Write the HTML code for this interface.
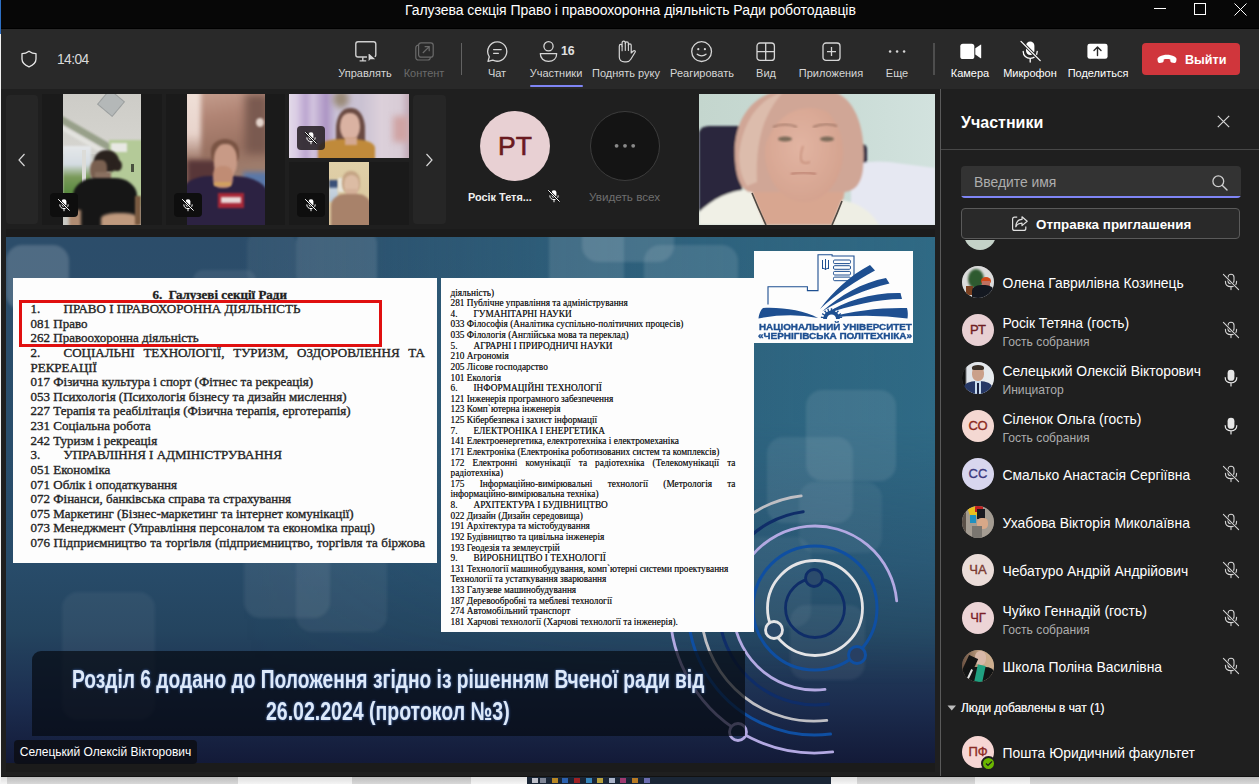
<!DOCTYPE html>
<html><head><meta charset="utf-8">
<style>
*{margin:0;padding:0;box-sizing:border-box}
html,body{width:1259px;height:784px;overflow:hidden;background:#dcdcdc;font-family:"Liberation Sans",sans-serif}
.a{position:absolute}
#title{left:1px;top:0;width:1258px;height:29px;background:#070707;border-bottom:1px solid #000}
#tb{left:1px;top:29px;width:1258px;height:60px;background:#292929}
#stage{left:1px;top:89px;width:939px;height:688px;background:#1f1f1f}
#panel{left:940px;top:89px;width:319px;height:688px;background:#1f1f1f;border-left:1px solid #5a5a5a}
.lbl{position:absolute;top:66px;font-size:11px;color:#d6d6d6;white-space:nowrap;line-height:14px}
.ico{position:absolute}
.ico svg{display:block}
.txt{position:absolute;white-space:nowrap}
</style></head><body>
<!-- left edge -->
<div class="a" style="left:0;top:0;width:1px;height:34px;background:#2d6fc4"></div>
<div class="a" style="left:0;top:34px;width:1px;height:750px;background:#f2f2f2"></div>

<div id="title" class="a">
  <div class="txt" style="left:404px;top:0px;font-size:14px;line-height:20px;color:#fff;letter-spacing:-0.05px">Галузева секція Право і правоохоронна діяльність Ради роботодавців</div>
  <div class="a" style="left:1153px;top:8px;width:12px;height:1px;background:#fff"></div>
  <div class="a" style="left:1193px;top:3px;width:12px;height:12px;border:1px solid #fff"></div>
  <svg class="a" style="left:1233px;top:3px" width="13" height="13" viewBox="0 0 13 13"><path d="M0.5 0.5L12.5 12.5M12.5 0.5L0.5 12.5" stroke="#fff" stroke-width="1"/></svg>
</div>

<div id="tb" class="a"></div>
<div id="stage" class="a"></div>
<div id="panel" class="a"></div>
<div class="a" style="left:6px;top:229px;width:929px;height:543px;background:#1b1b1b"></div>
<div class="a" style="left:1px;top:776px;width:1258px;height:1px;background:#111"></div>


<!-- TOOLBAR -->
<svg class="a" style="left:21px;top:50px" width="16" height="18" viewBox="0 0 16 18"><path d="M8 1.2 C5.5 3 3.3 3.6 1 3.6 V9 C1 12.6 3.6 15 8 16.8 C12.4 15 15 12.6 15 9 V3.6 C12.7 3.6 10.5 3 8 1.2Z" fill="none" stroke="#e6e6e6" stroke-width="1.3" stroke-linejoin="round"/></svg>
<div class="txt" style="left:57px;top:50.5px;font-size:13.8px;line-height:17px;color:#dadada;letter-spacing:-0.6px">14:04</div>

<!-- manage -->
<svg class="a" style="left:353px;top:39px" width="28" height="26" viewBox="0 0 28 26"><rect x="2.8" y="2.7" width="20" height="15.3" rx="2.2" fill="none" stroke="#cfcfcf" stroke-width="1.4"/><path d="M9.8 18.2V21.9M6.6 21.9H13.2" stroke="#cfcfcf" stroke-width="1.4"/><path d="M14.7 12.3L14.9 24.2L17.6 21.1L24.4 21.1Z" fill="#d8d8d8" stroke="#292929" stroke-width="1.6" stroke-linejoin="round"/></svg>
<div class="lbl" style="left:315px;width:100px;text-align:center">Управлять</div>
<!-- content -->
<svg class="a" style="left:414px;top:41px" width="22" height="21" viewBox="0 0 22 21"><rect x="1.8" y="4.2" width="14.5" height="14.8" rx="2.5" fill="none" stroke="#6a6a6a" stroke-width="1.2"/><rect x="4.6" y="1.8" width="14.6" height="14.4" rx="2.5" fill="#292929" stroke="#6a6a6a" stroke-width="1.2"/><path d="M8.8 12L15 5.8M10.6 5.6H15.2V10.2" fill="none" stroke="#6a6a6a" stroke-width="1.2"/></svg>
<div class="lbl" style="left:374px;width:100px;text-align:center;color:#6b6b6b">Контент</div>
<!-- separator -->
<div class="a" style="left:460.5px;top:43px;width:1.6px;height:32px;background:#626262"></div>
<!-- chat -->
<svg class="a" style="left:486px;top:40px" width="23" height="23" viewBox="0 0 23 23"><path d="M11.5 1.8A9.7 9.7 0 1 1 6.8 20.2L2 21.4L3.3 16.8A9.7 9.7 0 0 1 11.5 1.8Z" fill="none" stroke="#d6d6d6" stroke-width="1.3" stroke-linejoin="round"/><path d="M7.6 9.6H15.2M7.6 13.3H12.4" stroke="#d6d6d6" stroke-width="1.3" stroke-linecap="round"/></svg>
<div class="lbl" style="left:447px;width:100px;text-align:center">Чат</div>
<!-- people -->
<svg class="a" style="left:538px;top:40px" width="21" height="23" viewBox="0 0 21 23"><circle cx="10.5" cy="6.3" r="4.6" fill="none" stroke="#d6d6d6" stroke-width="1.3"/><path d="M2.3 13.6H18.7C18.7 18.4 15.3 21.4 10.5 21.4C5.7 21.4 2.3 18.4 2.3 13.6Z" fill="none" stroke="#d6d6d6" stroke-width="1.3" stroke-linejoin="round"/></svg>
<div class="txt" style="left:561px;top:43px;font-size:12.3px;font-weight:bold;line-height:16px;color:#e0e0e0">16</div>
<div class="lbl" style="left:506px;width:100px;text-align:center">Участники</div>
<div class="a" style="left:530px;top:85px;width:53px;height:2px;background:#7f85f5;border-radius:1px"></div>
<!-- raise hand -->
<svg class="a" style="left:617px;top:40px" width="20" height="23" viewBox="0 0 20 23"><path d="M2.3 17V6.2Q2.3 4.4 3.7 4.4Q5.1 4.4 5.1 6.2V3Q5.1 1.2 6.7 1.2Q8.3 1.2 8.3 3V3.4Q8.3 1.8 9.85 1.8Q11.4 1.8 11.4 3.4V5.2Q11.4 3.8 12.8 3.8Q14.2 3.8 14.2 5.2V13L16.3 11Q17.3 10.1 18.1 10.9Q18.6 11.5 18.1 12.3L13.8 19.3Q12.4 21.8 9.3 21.8H7.6Q2.3 21.8 2.3 17Z" fill="none" stroke="#d6d6d6" stroke-width="1.2" stroke-linejoin="round"/><path d="M5.1 6.2V10.8M8.3 3.4V10.4M11.4 5.2V10.4" stroke="#d6d6d6" stroke-width="1.1" stroke-linecap="round"/></svg>
<div class="lbl" style="left:576px;width:100px;text-align:center">Поднять руку</div>
<!-- react -->
<svg class="a" style="left:690px;top:40px" width="24" height="24" viewBox="0 0 24 24"><circle cx="11.6" cy="11.6" r="9.9" fill="none" stroke="#d6d6d6" stroke-width="1.3"/><circle cx="8.3" cy="9.2" r="1.1" fill="#d6d6d6"/><circle cx="14.9" cy="9.2" r="1.1" fill="#d6d6d6"/><path d="M7.2 14.2C9.6 16.4 13.6 16.4 16 14.2" fill="none" stroke="#d6d6d6" stroke-width="1.3" stroke-linecap="round"/></svg>
<div class="lbl" style="left:652px;width:100px;text-align:center">Реагировать</div>
<!-- view -->
<svg class="a" style="left:755px;top:41px" width="21" height="21" viewBox="0 0 21 21"><rect x="2" y="2" width="17.4" height="17.4" rx="3" fill="none" stroke="#d6d6d6" stroke-width="1.3"/><path d="M10.7 2V19.4M2 10.7H19.4" stroke="#d6d6d6" stroke-width="1.3"/></svg>
<div class="lbl" style="left:716px;width:100px;text-align:center">Вид</div>
<!-- apps -->
<svg class="a" style="left:821px;top:41px" width="21" height="21" viewBox="0 0 21 21"><rect x="2" y="2" width="17" height="17.4" rx="3" fill="none" stroke="#d6d6d6" stroke-width="1.3"/><path d="M10.5 6V15M6 10.7H15" stroke="#d6d6d6" stroke-width="1.3"/></svg>
<div class="lbl" style="left:781px;width:100px;text-align:center">Приложения</div>
<!-- more -->
<svg class="a" style="left:887px;top:49px" width="20" height="5" viewBox="0 0 20 5"><circle cx="3.1" cy="2.4" r="1.25" fill="#d6d6d6"/><circle cx="10.1" cy="2.4" r="1.25" fill="#d6d6d6"/><circle cx="17.1" cy="2.4" r="1.25" fill="#d6d6d6"/></svg>
<div class="lbl" style="left:847px;width:100px;text-align:center">Еще</div>
<div class="a" style="left:933px;top:43px;width:2px;height:32px;background:#4e4e4e"></div>
<!-- camera -->
<svg class="a" style="left:959px;top:42px" width="24" height="19" viewBox="0 0 24 19"><rect x="1.3" y="1.7" width="14" height="15.4" rx="2.6" fill="#fff"/><path d="M16.3 6.3L21.6 2.7C21.9 2.5 22.2 2.7 22.2 3V15.9C22.2 16.2 21.9 16.4 21.6 16.2L16.3 12.6Z" fill="#fff"/></svg>
<div class="lbl" style="left:920px;width:100px;text-align:center;color:#fff">Камера</div>
<!-- mic off -->
<svg class="a" style="left:1019px;top:40px" width="23" height="23" viewBox="0 0 23 23"><rect x="7" y="1.6" width="8.4" height="13.4" rx="4.2" fill="#fff"/><path d="M4.2 11.4C4.2 15.6 7.4 18.3 11.2 18.3C15 18.3 18.2 15.6 18.2 11.4M11.2 18.3V22" fill="none" stroke="#fff" stroke-width="1.3" stroke-linecap="round"/><path d="M2 1.4L21.6 21" stroke="#292929" stroke-width="3"/><path d="M2 1.4L21.2 20.6" stroke="#fff" stroke-width="1.3" stroke-linecap="round"/></svg>
<div class="lbl" style="left:980px;width:100px;text-align:center;color:#fff">Микрофон</div>
<!-- share -->
<svg class="a" style="left:1086px;top:42px" width="23" height="19" viewBox="0 0 23 19"><rect x="1.4" y="1.7" width="20.2" height="15.1" rx="2.4" fill="#fff"/><path d="M11.5 13.6V5.2M8 8.5L11.5 5L15 8.5" fill="none" stroke="#292929" stroke-width="1.4" stroke-linecap="round" stroke-linejoin="round"/></svg>
<div class="lbl" style="left:1048px;width:100px;text-align:center;color:#fff">Поделиться</div>
<!-- leave -->
<div class="a" style="left:1142px;top:43px;width:98px;height:32px;background:#d0363c;border-radius:4px"></div>
<svg class="a" style="left:1156px;top:53px" width="22" height="12" viewBox="0 0 22 12"><path d="M1.5 6.8C1.2 5.2 2 4.2 3.6 3.4C8.2 1.2 13.8 1.2 18.4 3.4C20 4.2 20.8 5.2 20.5 6.8L20.2 8.6C20 9.6 19.2 10.2 18.2 10L15.6 9.4C14.8 9.2 14.3 8.6 14.3 7.7V6.4C12.2 5.8 9.8 5.8 7.7 6.4V7.7C7.7 8.6 7.2 9.2 6.4 9.4L3.8 10C2.8 10.2 2 9.6 1.8 8.6Z" fill="#fff"/></svg>
<div class="txt" style="left:1185px;top:52px;font-size:12.6px;font-weight:bold;line-height:16px;color:#fff">Выйти</div>


<!-- VIDEO STRIP -->
<div class="a" style="left:6px;top:95px;width:32px;height:129px;background:#262626;border-radius:4px"></div>
<svg class="a" style="left:16px;top:152px" width="12" height="16" viewBox="0 0 12 16"><path d="M8.5 2L3 8L8.5 14" fill="none" stroke="#d6d6d6" stroke-width="1.2"/></svg>
<div class="a" style="left:413px;top:95px;width:33px;height:129px;background:#262626;border-radius:4px"></div>
<svg class="a" style="left:423px;top:152px" width="12" height="16" viewBox="0 0 12 16"><path d="M3.5 2L9 8L3.5 14" fill="none" stroke="#d6d6d6" stroke-width="1.2"/></svg>
<!-- tile1 -->
<div class="a" style="left:42px;top:94px;width:120px;height:131px;background:#1a1a1a"></div>
<div class="a vid" style="left:63px;top:94px;width:78px;height:131px;overflow:hidden;background:#c9c9c4">
  <div class="a" style="left:0;top:0;width:78px;height:60px;background:linear-gradient(180deg,#cdccc7,#d6d5d0)"></div>
  <div class="a" style="left:38px;top:-1px;width:20px;height:20px;background:#b4b8b8;border:1px solid #9a9e9e;transform:rotate(40deg);filter:blur(.4px)"></div>
  <div class="a" style="left:-8px;top:38px;width:68px;height:7px;background:#98a08a;transform:rotate(30deg);filter:blur(.8px)"></div>
  <div class="a" style="left:-6px;top:47px;width:62px;height:4px;background:#e4e4e0;transform:rotate(30deg);filter:blur(.8px)"></div>
  <div class="a" style="left:0;top:52px;width:28px;height:62px;background:linear-gradient(180deg,#e6e8ea 0%,#d4dce2 30%,#7a9a5a 50%,#5a8a40 75%,#4a7a38 100%);filter:blur(1px)"></div>
  <div class="a" style="left:19px;top:56px;width:4px;height:56px;background:#dcdcd8;filter:blur(.5px)"></div>
  <div class="a" style="left:46px;top:46px;width:34px;height:66px;background:#b4ca98;filter:blur(.8px)"></div>
  <div class="a" style="left:48px;top:49px;width:16px;height:9px;background:#e8e8e4;filter:blur(.8px)"></div>
  <div class="a" style="left:68px;top:70px;width:3px;height:8px;background:#4a5040;filter:blur(.5px)"></div>
  <div class="a" style="left:31px;top:56px;width:25px;height:22px;background:#2a221e;border-radius:50% 50% 40% 40%;filter:blur(1px)"></div>
  <div class="a" style="left:50px;top:66px;width:9px;height:11px;background:#2a221e;border-radius:50%;filter:blur(.8px)"></div>
  <div class="a" style="left:27px;top:66px;width:17px;height:22px;background:#7a6050;border-radius:40% 30% 45% 45%;filter:blur(1px)"></div>
  <div class="a" style="left:32px;top:78px;width:16px;height:10px;background:#8a7060;filter:blur(1px)"></div>
  <div class="a" style="left:10px;top:84px;width:64px;height:50px;background:#161616;border-radius:35% 35% 0 0;filter:blur(1.2px)"></div>
  <div class="a" style="left:38px;top:119px;width:38px;height:14px;background:#c09a7e;border-radius:40% 40% 0 0;filter:blur(1.5px)"></div>
  <div class="a" style="left:6px;top:116px;width:12px;height:18px;background:#b08c72;filter:blur(1.5px)"></div>
  <div class="a" style="left:72px;top:102px;width:6px;height:29px;background:#7a5a40;filter:blur(1px)"></div>
</div>
<div class="a" style="left:50px;top:193px;width:28px;height:24px;background:#0e0e0e;border-radius:4px"></div><div class="a" style="left:57px;top:198px"><svg width="14" height="14" viewBox="0 0 14 14"><rect x="4.6" y="1.2" width="4.8" height="7.6" rx="2.4" fill="#fff"/><path d="M2.8 6.8C2.8 9.2 4.6 10.6 7 10.6C9.4 10.6 11.2 9.2 11.2 6.8M7 10.6V12.8" fill="none" stroke="#fff" stroke-width="1" stroke-linecap="round"/><path d="M1.2 1.2L12.6 12.6" stroke="#111" stroke-width="2.2"/><path d="M1.2 1.2L12.6 12.6" stroke="#fff" stroke-width="1"/></svg></div>
<!-- tile2 -->
<div class="a" style="left:166px;top:94px;width:119px;height:131px;background:#1a1a1a"></div>
<div class="a vid" style="left:187px;top:94px;width:78px;height:131px;overflow:hidden;background:#8a6a5e">
  <div class="a" style="left:-5px;top:-5px;width:90px;height:95px;background:linear-gradient(170deg,#caa494 0%,#b08474 30%,#9a7262 60%,#a08474 100%);filter:blur(2px)"></div>
  <div class="a" style="left:58px;top:0;width:24px;height:60px;background:#7a5a50;filter:blur(4px)"></div>
  <div class="a" style="left:-4px;top:-4px;width:18px;height:72px;background:linear-gradient(180deg,#f0e0d8,#e8d4cc 60%,rgba(232,212,204,0));filter:blur(2.5px)"></div>
  <div class="a" style="left:69px;top:24px;width:8px;height:9px;background:#e4d4cc;border-radius:50%;filter:blur(1.2px)"></div>
  <div class="a" style="left:56px;top:78px;width:26px;height:34px;background:#5a78a8;filter:blur(2.5px)"></div>
  <div class="a" style="left:0;top:66px;width:30px;height:32px;background:#583638;filter:blur(2.5px)"></div>
  <div class="a" style="left:24px;top:45px;width:28px;height:24px;background:#7a5444;border-radius:50% 50% 30% 30%;filter:blur(1.2px)"></div>
  <div class="a" style="left:-4px;top:82px;width:86px;height:52px;background:#2c2242;border-radius:30% 40% 0 0;filter:blur(1.2px)"></div>
  <div class="a" style="left:27px;top:50px;width:23px;height:34px;background:#c89a86;border-radius:45%;filter:blur(1.2px)"></div>
  <div class="a" style="left:26px;top:72px;width:20px;height:22px;background:#c08c74;border-radius:40%;filter:blur(1.2px)"></div>
  <div class="a" style="left:27px;top:88px;width:17px;height:4px;background:#d0a060;filter:blur(.8px)"></div>
  <div class="a" style="left:31px;top:99px;width:26px;height:15px;background:#a82838;filter:blur(1px)"></div>
  <div class="a" style="left:34px;top:103px;width:20px;height:6px;background:#e8d8d8;filter:blur(.8px)"></div>
</div>
<div class="a" style="left:174px;top:193px;width:28px;height:24px;background:#0e0e0e;border-radius:4px"></div><div class="a" style="left:181px;top:198px"><svg width="14" height="14" viewBox="0 0 14 14"><rect x="4.6" y="1.2" width="4.8" height="7.6" rx="2.4" fill="#fff"/><path d="M2.8 6.8C2.8 9.2 4.6 10.6 7 10.6C9.4 10.6 11.2 9.2 11.2 6.8M7 10.6V12.8" fill="none" stroke="#fff" stroke-width="1" stroke-linecap="round"/><path d="M1.2 1.2L12.6 12.6" stroke="#111" stroke-width="2.2"/><path d="M1.2 1.2L12.6 12.6" stroke="#fff" stroke-width="1"/></svg></div>
<!-- tile3 -->
<div class="a vid" style="left:289px;top:94px;width:120px;height:64px;overflow:hidden;background:#cdc4d2">
  <div class="a" style="left:-4px;top:-4px;width:128px;height:72px;background:linear-gradient(90deg,#e6e0ea 0%,#dacce4 9%,#bca6d0 16%,#d2c4de 22%,#ac94c4 32%,#cac2d6 40%,#cac2d2 60%,#dcd0da 75%,#d8ccd6 90%,#b89aa8 100%);filter:blur(1.5px)"></div>
  <div class="a" style="left:44px;top:-4px;width:16px;height:18px;background:#9a8a78;border-radius:50%;filter:blur(3px)"></div>
  <div class="a" style="left:104px;top:22px;width:16px;height:26px;background:#cfa4a4;filter:blur(3px)"></div>
  <div class="a" style="left:47px;top:14px;width:29px;height:46px;background:#6a4a42;border-radius:45% 45% 25% 25%;filter:blur(1px)"></div>
  <div class="a" style="left:51px;top:19px;width:20px;height:27px;background:#dab2a2;border-radius:45%;filter:blur(.8px)"></div>
  <div class="a" style="left:29px;top:45px;width:57px;height:22px;background:#c08a3a;border-radius:40% 40% 0 0;filter:blur(1px)"></div>
  <div class="a" style="left:56px;top:43px;width:12px;height:8px;background:#d4a890;filter:blur(1px)"></div>
</div>
<div class="a" style="left:297px;top:126px;width:28px;height:24px;background:rgba(34,28,32,.85);border-radius:4px"></div><div class="a" style="left:304px;top:131px"><svg width="14" height="14" viewBox="0 0 14 14"><rect x="4.6" y="1.2" width="4.8" height="7.6" rx="2.4" fill="#fff"/><path d="M2.8 6.8C2.8 9.2 4.6 10.6 7 10.6C9.4 10.6 11.2 9.2 11.2 6.8M7 10.6V12.8" fill="none" stroke="#fff" stroke-width="1" stroke-linecap="round"/><path d="M1.2 1.2L12.6 12.6" stroke="#111" stroke-width="2.2"/><path d="M1.2 1.2L12.6 12.6" stroke="#fff" stroke-width="1"/></svg></div>
<!-- tile4 -->
<div class="a" style="left:289px;top:162px;width:120px;height:63px;background:#1a1a1a"></div>
<div class="a vid" style="left:329px;top:162px;width:40px;height:63px;overflow:hidden;background:linear-gradient(180deg,#e0d0a8,#d8c49c)">
  <div class="a" style="left:0;top:18px;width:9px;height:22px;background:linear-gradient(180deg,#3a5078 0%,#3a5078 30%,#c8d4e0 40%,#b8c8d8 100%);filter:blur(.8px)"></div>
  <div class="a" style="left:9px;top:16px;width:6px;height:14px;background:#e8e6dc;filter:blur(.8px)"></div>
  <div class="a" style="left:13px;top:9px;width:18px;height:22px;background:#c4a484;border-radius:45% 45% 40% 40%;filter:blur(.8px)"></div>
  <div class="a" style="left:15px;top:13px;width:15px;height:19px;background:#dcbca4;border-radius:45%;filter:blur(.8px)"></div>
  <div class="a" style="left:17px;top:27px;width:11px;height:8px;background:#d4b098;filter:blur(.8px)"></div>
  <div class="a" style="left:2px;top:32px;width:40px;height:33px;background:#a8826a;border-radius:35% 35% 0 0;filter:blur(.8px)"></div>
</div>
<div class="a" style="left:297px;top:193px;width:28px;height:24px;background:#0e0e0e;border-radius:4px"></div><div class="a" style="left:304px;top:198px"><svg width="14" height="14" viewBox="0 0 14 14"><rect x="4.6" y="1.2" width="4.8" height="7.6" rx="2.4" fill="#fff"/><path d="M2.8 6.8C2.8 9.2 4.6 10.6 7 10.6C9.4 10.6 11.2 9.2 11.2 6.8M7 10.6V12.8" fill="none" stroke="#fff" stroke-width="1" stroke-linecap="round"/><path d="M1.2 1.2L12.6 12.6" stroke="#111" stroke-width="2.2"/><path d="M1.2 1.2L12.6 12.6" stroke="#fff" stroke-width="1"/></svg></div>
<!-- avatar RT -->
<div class="a" style="left:480px;top:111px;width:70px;height:70px;border-radius:50%;background:#e8d0d3"></div>
<div class="txt" style="left:480px;top:128px;width:70px;text-align:center;font-size:26.5px;line-height:36px;color:#6a1a20;-webkit-text-stroke:.6px #6a1a20">PT</div>
<div class="txt" style="left:468px;top:190px;font-size:10.9px;font-weight:bold;line-height:14px;color:#f0f0f0">Росік Тетя...</div>
<div class="a" style="left:547px;top:189px"><svg width="14" height="14" viewBox="0 0 14 14"><rect x="4.6" y="1.2" width="4.8" height="7.6" rx="2.4" fill="#fff"/><path d="M2.8 6.8C2.8 9.2 4.6 10.6 7 10.6C9.4 10.6 11.2 9.2 11.2 6.8M7 10.6V12.8" fill="none" stroke="#fff" stroke-width="1" stroke-linecap="round"/><path d="M1.2 1.2L12.6 12.6" stroke="#111" stroke-width="2.2"/><path d="M1.2 1.2L12.6 12.6" stroke="#fff" stroke-width="1"/></svg></div>
<div class="a" style="left:590px;top:111px;width:70px;height:70px;border-radius:50%;background:#141414;border:1px solid #3c3c3c"></div>
<svg class="a" style="left:613px;top:142px" width="24" height="8" viewBox="0 0 24 8"><circle cx="3.6" cy="3.8" r="1.9" fill="#8a8a8a"/><circle cx="12" cy="3.8" r="1.9" fill="#8a8a8a"/><circle cx="20.2" cy="3.8" r="1.9" fill="#8a8a8a"/></svg>
<div class="txt" style="left:589px;top:189.5px;font-size:11.7px;line-height:14px;color:#6e6e6e">Увидеть всех</div>
<!-- big video -->
<svg class="a" style="left:699px;top:94px" width="236" height="131" viewBox="0 0 236 131">
 <defs><filter id="bl1" x="-10%" y="-10%" width="120%" height="120%"><feGaussianBlur stdDeviation="1.1"/></filter>
 <linearGradient id="wall" x1="0" x2="1" y1="0" y2="0"><stop offset="0" stop-color="#c4d6ce"/><stop offset=".6" stop-color="#cadcd6"/><stop offset="1" stop-color="#d2e2de"/></linearGradient>
 <radialGradient id="face" cx=".45" cy=".45" r=".6"><stop offset="0" stop-color="#e2b4a2"/><stop offset="1" stop-color="#d4a28e"/></radialGradient></defs>
 <rect width="236" height="131" fill="url(#wall)"/>
 <g filter="url(#bl1)">
 <path d="M0 38Q2 32 10 32H40L44 118H0Z" fill="#2a283c"/>
 <rect x="152" y="50" width="16" height="58" rx="5" fill="#2a283c"/>
 <path d="M152 74Q160 66 190 68L236 74V131H152Z" fill="#e6e8f2"/>
 <path d="M62 86H148L144 106L134 131H66L52 99Z" fill="#d8a690"/>
 <path d="M0 118C14 104 36 94 52 96L66 131H0Z" fill="#f0f0e6"/>
 <path d="M143 106C156 108 172 116 180 131H133Z" fill="#eeeee4"/>
 <path d="M36 66C33 28 52 0 84 -4H128C156 0 168 34 164 76C162 90 156 97 146 98H50C40 94 37 80 36 66Z" fill="#d0a696"/>
 <path d="M40 60C44 28 58 6 84 -2C66 18 56 46 58 88L48 92C42 82 40 72 40 60Z" fill="#dcbcac"/>
 <ellipse cx="105" cy="58" rx="39" ry="50" fill="url(#face)"/>
 <path d="M62 50C62 18 84 -2 108 -2C132 -2 150 14 150 40C142 22 126 14 110 14C92 14 72 26 64 60Z" fill="#d0a696"/>
 
 
 </g>
 <path d="M53 99Q60 116 67 131M143 107Q138 120 133 131" fill="none" stroke="#4e4842" stroke-width="1.6"/>
 <path d="M74 33Q86 28 98 33M114 33Q126 28 138 32" fill="none" stroke="#9a7262" stroke-width="1.6" filter="url(#bl1)"/>
 <ellipse cx="86" cy="45" rx="7" ry="2.6" fill="#7a6a58" filter="url(#bl1)"/>
 <ellipse cx="128" cy="45" rx="7" ry="2.6" fill="#7a6a58" filter="url(#bl1)"/>
 <path d="M92 80Q104 77 117 80" fill="none" stroke="#b87a6a" stroke-width="2.2" filter="url(#bl1)"/>
 <path d="M104 52Q100 64 103 68Q107 70 111 68" fill="none" stroke="#c48c78" stroke-width="1.4" filter="url(#bl1)"/>
</svg>


<!-- SLIDE -->
<div class="a" id="slide" style="left:6px;top:237px;width:929px;height:526px;overflow:hidden;background:linear-gradient(180deg,#2c4d6a 0%,#2a4e6c 40%,#284c6a 62%,#24445f 75%,#1c2e50 88%,#131a38 100%)">
  <div class="a" style="left:0;top:0;width:929px;height:526px;background:linear-gradient(90deg,rgba(50,125,150,0) 25%,rgba(50,125,150,.35) 60%,rgba(50,125,150,.6) 100%);-webkit-mask-image:linear-gradient(180deg,#000 0%,#000 35%,rgba(0,0,0,.5) 60%,transparent 85%)"></div>
  <div class="a" style="left:0px;top:8px;width:63px;height:65px;border-radius:16px;background:rgba(255,255,255,0.17);filter:blur(1.5px)"></div>
  <div class="a" style="left:241px;top:-5px;width:49px;height:53px;border-radius:12px;background:rgba(255,255,255,0.05);filter:blur(1.5px)"></div>
  <div class="a" style="left:290px;top:-9px;width:81px;height:72px;border-radius:16px;background:rgba(255,255,255,0.11);filter:blur(1.5px)"></div>
  <div class="a" style="left:543px;top:-17px;width:75px;height:80px;border-radius:16px;background:rgba(255,255,255,0.11);filter:blur(1.5px)"></div>
  <div class="a" style="left:576px;top:-22px;width:92px;height:47px;border-radius:16px;background:rgba(255,255,255,0.12);filter:blur(1.5px)"></div>
  <div class="a" style="left:638px;top:8px;width:94px;height:75px;border-radius:16px;background:rgba(255,255,255,0.11);filter:blur(1.5px)"></div>
  <div class="a" style="left:187px;top:33px;width:63px;height:30px;border-radius:10px;background:rgba(255,255,255,0.08);filter:blur(1.5px)"></div>
  <div class="a" style="left:800px;top:153px;width:90px;height:91px;border-radius:16px;background:rgba(255,255,255,0.09);filter:blur(1.5px)"></div>
  <div class="a" style="left:761px;top:200px;width:86px;height:86px;border-radius:16px;background:rgba(255,255,255,0.08);filter:blur(1.5px)"></div>
  <div class="a" style="left:793px;top:245px;width:83px;height:71px;border-radius:16px;background:rgba(255,255,255,0.06);filter:blur(1.5px)"></div>
  <div class="a" style="left:56px;top:355px;width:93px;height:128px;border-radius:16px;background:rgba(255,255,255,0.05);filter:blur(1.5px)"></div>
  <div class="a" style="left:238px;top:293px;width:86px;height:88px;border-radius:16px;background:rgba(255,255,255,0.07);filter:blur(1.5px)"></div>
  <div class="a" style="left:290px;top:303px;width:91px;height:92px;border-radius:16px;background:rgba(255,255,255,0.06);filter:blur(1.5px)"></div>
  <div class="a" style="left:784px;top:368px;width:75px;height:75px;border-radius:16px;background:rgba(255,255,255,0.06);filter:blur(1.5px)"></div>
  <div class="a" style="left:735px;top:300px;width:70px;height:90px;border-radius:16px;background:rgba(255,255,255,0.05);filter:blur(1.5px)"></div>
</div>
<style>
.p1{font-family:"Liberation Serif",serif;font-size:13px;line-height:14.61px;color:#1a1a1a;-webkit-text-stroke:0.35px #2a2a2a}
.p2{font-family:"Liberation Serif",serif;font-size:9.3px;line-height:10.63px;color:#1e1e1e;white-space:nowrap;text-shadow:0 0 .6px #555}
.p1 div,.p2 div{white-space:nowrap}
.p1 .jl,.p2 .jl{white-space:normal}
.jl{text-align:justify;text-align-last:justify}
</style>
<svg class="a" style="left:6px;top:237px" width="929" height="526" viewBox="6 237 929 526"><path d="M832.7 751.9A145 145 0 0 1 696.2 524.8" fill="none" stroke="#b3a9e2" stroke-width="2.8" stroke-linecap="round"/><path d="M830.5 734.1A127 127 0 0 1 711.0 535.2" fill="none" stroke="#0f4fa2" stroke-width="3" stroke-linecap="round"/><path d="M826.8 720.4A113 113 0 0 1 801.2 495.8" fill="none" stroke="#bfbfc4" stroke-width="2.8" stroke-linecap="round"/><path d="M828.5 704.1A97 97 0 1 1 803.2 511.7" fill="none" stroke="#0f2d68" stroke-width="3" stroke-linecap="round"/><path d="M825.0 689.4A82 82 0 1 1 896.7 600.9" fill="none" stroke="#b3a9e2" stroke-width="2.8" stroke-linecap="round"/><circle cx="815" cy="608" r="62" fill="none" stroke="#0f4fa2" stroke-width="3"/><circle cx="815" cy="608" r="47.5" fill="none" stroke="#e4e4e6" stroke-width="2.8"/><circle cx="815" cy="608" r="29.5" fill="none" stroke="#0f2d68" stroke-width="2.8"/><circle cx="814" cy="578" r="8.5" fill="#2b4b6c" stroke="#0f2d68" stroke-width="2.8"/><circle cx="774" cy="630" r="8.5" fill="#2a4868" stroke="#e4e4e6" stroke-width="2.8"/><circle cx="857" cy="655" r="8.5" fill="#283f62" stroke="#0f4fa2" stroke-width="3"/><circle cx="738" cy="732" r="8.5" fill="#1f2f56" stroke="#b3a9e2" stroke-width="2.8"/></svg>
<div class="a" style="left:13px;top:278px;width:424px;height:285px;background:#fdfdfd"></div>
<div class="a p1" style="left:30.5px;top:287.6px;width:394.5px">
<div style="text-align:center;margin-left:-16px"><b>6.&nbsp; Галузеві секції Ради</b></div>
<div><span style="display:inline-block;width:33px">1.</span>ПРАВО І ПРАВОХОРОННА ДІЯЛЬНІСТЬ</div>
<div>081 Право</div>
<div>262 Правоохоронна діяльність</div>
<div class="jl"><span style="display:inline-block;width:33px">2.</span>СОЦІАЛЬНІ ТЕХНОЛОГІЇ, ТУРИЗМ, ОЗДОРОВЛЕННЯ ТА</div>
<div>РЕКРЕАЦІЇ</div>
<div>017 Фізична культура і спорт (Фітнес та рекреація)</div>
<div>053 Психологія (Психологія бізнесу та дизайн мислення)</div>
<div>227 Терапія та реабілітація (Фізична терапія, ерготерапія)</div>
<div>231 Соціальна робота</div>
<div>242 Туризм і рекреація</div>
<div><span style="display:inline-block;width:33px">3.</span>УПРАВЛІННЯ І АДМІНІСТРУВАННЯ</div>
<div>051 Економіка</div>
<div>071 Облік і оподаткування</div>
<div>072 Фінанси, банківська справа та страхування</div>
<div>075 Маркетинг (Бізнес-маркетинг та інтернет комунікації)</div>
<div>073 Менеджмент (Управління персоналом та економіка праці)</div>
<div class="jl">076 Підприємництво та торгівля (підприємництво, торгівля та біржова</div>
</div>
<div class="a" style="left:19px;top:300px;width:363px;height:47px;border:3px solid #e01010"></div>
<div class="a" style="left:441px;top:278px;width:313px;height:354px;background:#fdfdfd"></div>
<div class="a p2" style="left:450.5px;top:287.6px;width:285px">
<div>діяльність)</div>
<div>281 Публічне управління та адміністрування</div>
<div><span style="display:inline-block;width:23px">4.</span>ГУМАНІТАРНІ НАУКИ</div>
<div>033 Філософія (Аналітика суспільно-політичних процесів)</div>
<div>035 Філологія (Англійська мова та переклад)</div>
<div><span style="display:inline-block;width:23px">5.</span>АГРАРНІ І ПРИРОДНИЧІ НАУКИ</div>
<div>210 Агрономія</div>
<div>205 Лісове господарство</div>
<div>101 Екологія</div>
<div><span style="display:inline-block;width:23px">6.</span>ІНФОРМАЦІЙНІ ТЕХНОЛОГІЇ</div>
<div>121 Інженерія програмного забезпечення</div>
<div>123 Комп`ютерна інженерія</div>
<div>125 Кібербезпека і захист інформації</div>
<div><span style="display:inline-block;width:23px">7.</span>ЕЛЕКТРОНІКА І ЕНЕРГЕТИКА</div>
<div>141 Електроенергетика, електротехніка і електромеханіка</div>
<div>171 Електроніка (Електроніка роботизованих систем та комплексів)</div>
<div class="jl">172 Електронні комунікації та радіотехніка (Телекомунікації та</div>
<div>радіотехніка)</div>
<div class="jl">175 Інформаційно-вимірювальні технології (Метрологія та</div>
<div>інформаційно-вимірювальна техніка)</div>
<div><span style="display:inline-block;width:23px">8.</span>АРХІТЕКТУРА І БУДІВНИЦТВО</div>
<div>022 Дизайн (Дизайн середовища)</div>
<div>191 Архітектура та містобудування</div>
<div>192 Будівництво та цивільна інженерія</div>
<div>193 Геодезія та землеустрій</div>
<div><span style="display:inline-block;width:23px">9.</span>ВИРОБНИЦТВО І ТЕХНОЛОГІЇ</div>
<div>131 Технології машинобудування, комп`ютерні системи проектування</div>
<div>Технології та устаткування зварювання</div>
<div>133 Галузеве машинобудування</div>
<div>187 Деревообробні та меблеві технології</div>
<div>274 Автомобільний транспорт</div>
<div>181 Харчові технології (Харчові технології та інженерія).</div>
</div>
<div class="a" style="left:754px;top:250.5px;width:158.5px;height:92px;background:#fdfdfd"></div>


<svg class="a" style="left:754px;top:250.5px" width="159" height="92" viewBox="754 250.5 159 92">
 <path d="M768 304V286.2H807.4V290.1H818V254.2H832.1V255.5H854V281" fill="none" stroke="#1e4f91" stroke-width="1.1"/>
 <g fill="none" stroke="#1e4f91" stroke-width="1">
  <rect x="833.5" y="259.5" width="17" height="3.6" rx="1.2"/>
  <rect x="833.5" y="265.2" width="17" height="3.6" rx="1.2"/>
  <rect x="833.5" y="270.9" width="17" height="3.6" rx="1.2"/>
  <rect x="833.5" y="276.6" width="17" height="3.6" rx="1.2"/>
 </g>
 <path d="M822.5 259.5V268.5M825.5 258.5V269.5M828.5 259.5V268.5M822.5 267.5Q825.5 270 828.5 267.5" fill="none" stroke="#1e4f91" stroke-width="1"/>
 <path d="M758.5 318C759 313 761 309 763 307.5C782 306.5 804 310 818 317.5Q790 312 758.5 318Z" fill="#1e4f91"/>
 <path d="M826 317.5C855 310 880 307 907 307.5C908 311 908 315 907.5 318Q870 313 826 317.5Z" fill="#1e4f91"/>
 <path d="M824 314C845 300 872 292 900.5 292.5L902 298.5C877 298.5 850 305 824 314Z" fill="#1e4f91"/>
 <path d="M822 311C840 295 862 282 886 277.5L889.5 283C866 288.5 842 299 822 311Z" fill="#1e4f91"/>
 <path d="M820 308.5C833 291 850 275 870 264.5L875 270C856 280 836 294 820 308.5Z" fill="#1e4f91"/>
 <path d="M823.2 318.5L823.2 318.5L823.2 317.6L820.8 317.4L821.0 315.9L823.4 316.5L823.7 315.7L823.7 315.7L824.0 314.9L821.8 313.8L822.5 312.5L824.6 313.9L825.1 313.2L825.1 313.2L825.7 312.5L824.0 310.7L825.2 309.8L826.6 311.8L827.4 311.3L827.4 311.3L828.1 310.9L827.1 308.6L828.5 308.1L829.2 310.5L830.1 310.3L830.1 310.3L830.9 310.2L830.7 307.7L832.3 307.7L832.1 310.2L832.9 310.3L832.9 310.3L833.8 310.5L834.5 308.1L835.9 308.6L834.9 310.9L835.6 311.3L835.6 311.3L836.4 311.8L837.8 309.8L839.0 310.7L837.3 312.5L837.9 313.2L837.9 313.2L838.4 313.9L840.5 312.5L841.2 313.8L839.0 314.9L839.3 315.7L839.3 315.7L839.6 316.5L842.0 315.9L842.2 317.4L839.8 317.6L839.8 318.5Z" fill="#1e4f91"/><path d="M826.9 318.5A4.6 4.6 0 0 1 836.1 318.5Z" fill="#fff"/>
</svg>
<div class="txt" style="left:759px;top:322px;font-size:8.4px;font-weight:bold;line-height:10px;color:#1e4f91;-webkit-text-stroke:.35px #1e4f91;transform:scaleX(1.175);transform-origin:0 0">НАЦІОНАЛЬНИЙ УНІВЕРСИТЕТ</div>
<div class="txt" style="left:758px;top:331px;font-size:8.4px;font-weight:bold;line-height:10px;color:#1e4f91;-webkit-text-stroke:.35px #1e4f91;transform:scaleX(1.19);transform-origin:0 0">«ЧЕРНІГІВСЬКА ПОЛІТЕХНІКА»</div>

<div class="a" style="left:32px;top:650.5px;width:713px;height:85.5px;background:rgba(6,10,17,.7);border-radius:9px 0 0 0"></div>
<div class="txt" style="left:72px;top:664px;font-size:26px;font-weight:bold;line-height:30px;color:#dde9f9;transform:scaleX(.738);transform-origin:0 0;text-shadow:0 0 3px rgba(90,140,230,.8)">Розділ 6 додано до Положення згідно із рішенням Вченої ради від</div>
<div class="txt" style="left:266px;top:696px;font-size:26px;font-weight:bold;line-height:30px;color:#dde9f9;transform:scaleX(.75);transform-origin:0 0;text-shadow:0 0 3px rgba(90,140,230,.8)">26.02.2024 (протокол №3)</div>
<div class="a" style="left:14px;top:740px;width:183px;height:23.5px;background:rgba(12,14,22,.9);border-radius:4px"></div>
<div class="txt" style="left:19.8px;top:744px;font-size:12px;line-height:16px;color:#fff">Селецький Олексій Вікторович</div>


<!-- PANEL -->
<div class="txt" style="left:961px;top:113px;font-size:16px;font-weight:bold;line-height:19px;color:#fff">Участники</div>
<svg class="a" style="left:1216px;top:114px" width="15" height="15" viewBox="0 0 15 15"><path d="M1.8 1.8L13.2 13.2M13.2 1.8L1.8 13.2" stroke="#d6d6d6" stroke-width="1.2"/></svg>
<div class="a" style="left:941px;top:149px;width:318px;height:1px;background:#474747"></div>
<div class="a" style="left:961px;top:166px;width:280px;height:32px;background:#333;border-radius:4px;overflow:hidden"><div class="a" style="left:0;top:30px;width:280px;height:2px;background:#7f85f5"></div></div>
<div class="txt" style="left:974px;top:174px;font-size:13.9px;line-height:17px;color:#adadad">Введите имя</div>
<svg class="a" style="left:1211px;top:174px" width="18" height="18" viewBox="0 0 18 18"><circle cx="7.3" cy="7.3" r="5.4" fill="none" stroke="#cfcfcf" stroke-width="1.3"/><path d="M11.2 11.2L16 16" stroke="#cfcfcf" stroke-width="1.4" stroke-linecap="round"/></svg>
<div class="a" style="left:961px;top:208px;width:279px;height:31px;background:#292929;border:1px solid #5a5a5a;border-radius:4px"></div>
<svg class="a" style="left:1011px;top:215px" width="18" height="17" viewBox="0 0 18 17"><path d="M6.2 2.2H3.6C2.4 2.2 1.6 3 1.6 4.2V13.4C1.6 14.6 2.4 15.4 3.6 15.4H12.8C14 15.4 14.8 14.6 14.8 13.4V11.6" fill="none" stroke="#e0e0e0" stroke-width="1.2"/><path d="M11 1.8L16.2 6.2L11 10.6V8.2C8 8.2 6 9.2 4.8 11.8C5 7.4 7.2 4.6 11 4.4Z" fill="none" stroke="#e0e0e0" stroke-width="1.2" stroke-linejoin="round"/></svg>
<div class="txt" style="left:1036px;top:216px;font-size:13.4px;font-weight:bold;line-height:17px;color:#fff">Отправка приглашения</div>
<div class="a" style="left:941px;top:240px;width:318px;height:537px;overflow:hidden">
  <div class="a" style="left:23px;top:-22px;width:32px;height:32px;border-radius:50%;background:#c4d2c8"></div>
</div>
<div class="a" style="left:962px;top:266px;width:32px;height:32px;border-radius:50%;overflow:hidden;background:#555"><div class="a" style="left:0;top:0;width:32px;height:32px;background:#dcdcdc"></div><div class="a" style="left:6px;top:3px;width:16px;height:20px;background:#2e5a30;border-radius:50%;filter:blur(1px)"></div><div class="a" style="left:4px;top:20px;width:7px;height:9px;background:#7a4020;filter:blur(.6px)"></div><div class="a" style="left:19px;top:11px;width:10px;height:8px;background:#d04818;border-radius:50%;filter:blur(.6px)"></div><div class="a" style="left:20px;top:15px;width:8px;height:6px;background:#c07060;filter:blur(.6px)"></div><div class="a" style="left:10px;top:19px;width:22px;height:14px;background:#141820;border-radius:40% 40% 0 0;filter:blur(.6px)"></div></div>
<div class="txt" style="left:1002.5px;top:274px;font-size:13.9px;line-height:18px;color:#fff">Олена Гаврилівна Козинець</div>
<svg class="a" style="left:1222px;top:273px" width="18" height="18" viewBox="0 0 18 18"><rect x="6" y="1.2" width="6" height="9.6" rx="3" fill="none" stroke="#d6d6d6" stroke-width="1.1"/><path d="M3.4 8.4C3.4 11.6 5.8 13.6 9 13.6C12.2 13.6 14.6 11.6 14.6 8.4M9 13.6V16.6" fill="none" stroke="#d6d6d6" stroke-width="1.1" stroke-linecap="round"/><path d="M1.4 1.4L16.8 16.8" stroke="#1f1f1f" stroke-width="2.6"/><path d="M1.4 1.4L16.6 16.6" stroke="#d6d6d6" stroke-width="1.1" stroke-linecap="round"/></svg>
<div class="a" style="left:962px;top:314px;width:32px;height:32px;border-radius:50%;background:#e8d0d3"></div><div class="txt" style="left:962px;top:322px;width:32px;text-align:center;font-size:13px;line-height:16px;color:#6e1d22;-webkit-text-stroke:.35px currentColor">РТ</div>
<div class="txt" style="left:1002.5px;top:314px;font-size:13.9px;line-height:18px;color:#fff">Росік Тетяна (гость)</div><div class="txt" style="left:1002.5px;top:334px;font-size:12.1px;line-height:16px;color:#adadad">Гость собрания</div>
<svg class="a" style="left:1222px;top:321px" width="18" height="18" viewBox="0 0 18 18"><rect x="6" y="1.2" width="6" height="9.6" rx="3" fill="none" stroke="#d6d6d6" stroke-width="1.1"/><path d="M3.4 8.4C3.4 11.6 5.8 13.6 9 13.6C12.2 13.6 14.6 11.6 14.6 8.4M9 13.6V16.6" fill="none" stroke="#d6d6d6" stroke-width="1.1" stroke-linecap="round"/><path d="M1.4 1.4L16.8 16.8" stroke="#1f1f1f" stroke-width="2.6"/><path d="M1.4 1.4L16.6 16.6" stroke="#d6d6d6" stroke-width="1.1" stroke-linecap="round"/></svg>
<div class="a" style="left:962px;top:362px;width:32px;height:32px;border-radius:50%;overflow:hidden;background:#555"><div class="a" style="left:0;top:0;width:32px;height:32px;background:linear-gradient(90deg,#101010 0,#101010 3px,#dfe3e8 5px,#e8ecef)"></div><div class="a" style="left:10px;top:4px;width:12px;height:15px;background:#caa08a;border-radius:45%"></div><div class="a" style="left:10px;top:3px;width:12px;height:5px;background:#3a3028;border-radius:50% 50% 20% 20%"></div><div class="a" style="left:2px;top:19px;width:28px;height:14px;background:#263866;border-radius:45% 45% 0 0"></div><div class="a" style="left:13px;top:19px;width:6px;height:13px;background:#c8dcf0"></div><div class="a" style="left:15px;top:21px;width:2px;height:11px;background:#182040"></div></div>
<div class="txt" style="left:1002.5px;top:362px;font-size:13.9px;line-height:18px;color:#fff">Селецький Олексій Вікторович</div><div class="txt" style="left:1002.5px;top:382px;font-size:12.1px;line-height:16px;color:#adadad">Инициатор</div>
<svg class="a" style="left:1224px;top:369px" width="14" height="18" viewBox="0 0 14 18"><rect x="3.6" y="0.8" width="6.8" height="11" rx="3.4" fill="#e6e6e6"/><path d="M1.2 8.6C1.2 11.8 3.6 13.8 7 13.8C10.4 13.8 12.8 11.8 12.8 8.6M7 13.8V17" fill="none" stroke="#e6e6e6" stroke-width="1.2" stroke-linecap="round"/></svg>
<div class="a" style="left:962px;top:410px;width:32px;height:32px;border-radius:50%;background:#f4d8d2"></div><div class="txt" style="left:962px;top:418px;width:32px;text-align:center;font-size:13px;line-height:16px;color:#8c2a1e;-webkit-text-stroke:.35px currentColor">СО</div>
<div class="txt" style="left:1002.5px;top:410px;font-size:13.9px;line-height:18px;color:#fff">Сіленок Ольга (гость)</div><div class="txt" style="left:1002.5px;top:430px;font-size:12.1px;line-height:16px;color:#adadad">Гость собрания</div>
<svg class="a" style="left:1224px;top:417px" width="14" height="18" viewBox="0 0 14 18"><rect x="3.6" y="0.8" width="6.8" height="11" rx="3.4" fill="#e6e6e6"/><path d="M1.2 8.6C1.2 11.8 3.6 13.8 7 13.8C10.4 13.8 12.8 11.8 12.8 8.6M7 13.8V17" fill="none" stroke="#e6e6e6" stroke-width="1.2" stroke-linecap="round"/></svg>
<div class="a" style="left:962px;top:458px;width:32px;height:32px;border-radius:50%;background:#d8d6ee"></div><div class="txt" style="left:962px;top:466px;width:32px;text-align:center;font-size:13px;line-height:16px;color:#3c3a80;-webkit-text-stroke:.35px currentColor">СС</div>
<div class="txt" style="left:1002.5px;top:466px;font-size:13.9px;line-height:18px;color:#fff">Смалько Анастасія Сергіївна</div>
<svg class="a" style="left:1222px;top:465px" width="18" height="18" viewBox="0 0 18 18"><rect x="6" y="1.2" width="6" height="9.6" rx="3" fill="none" stroke="#d6d6d6" stroke-width="1.1"/><path d="M3.4 8.4C3.4 11.6 5.8 13.6 9 13.6C12.2 13.6 14.6 11.6 14.6 8.4M9 13.6V16.6" fill="none" stroke="#d6d6d6" stroke-width="1.1" stroke-linecap="round"/><path d="M1.4 1.4L16.8 16.8" stroke="#1f1f1f" stroke-width="2.6"/><path d="M1.4 1.4L16.6 16.6" stroke="#d6d6d6" stroke-width="1.1" stroke-linecap="round"/></svg>
<div class="a" style="left:962px;top:506px;width:32px;height:32px;border-radius:50%;overflow:hidden;background:#555"><div class="a" style="left:0;top:0;width:32px;height:32px;background:#a49c92"></div><div class="a" style="left:0;top:0;width:4px;height:32px;background:#5a5048"></div><div class="a" style="left:7px;top:1px;width:9px;height:10px;background:#e8c020;transform:rotate(-20deg);filter:blur(.5px)"></div><div class="a" style="left:13px;top:0px;width:8px;height:6px;background:#c02020;filter:blur(.5px)"></div><div class="a" style="left:15px;top:3px;width:8px;height:10px;background:#1a1a20;filter:blur(.5px)"></div><div class="a" style="left:8px;top:9px;width:6px;height:8px;background:#2090c0;filter:blur(.5px)"></div><div class="a" style="left:15px;top:12px;width:11px;height:11px;background:#d8a888;border-radius:40%;filter:blur(.5px)"></div><div class="a" style="left:10px;top:20px;width:10px;height:12px;background:#7a7670;filter:blur(.6px)"></div></div>
<div class="txt" style="left:1002.5px;top:514px;font-size:13.9px;line-height:18px;color:#fff">Ухабова Вікторія Миколаївна</div>
<svg class="a" style="left:1222px;top:513px" width="18" height="18" viewBox="0 0 18 18"><rect x="6" y="1.2" width="6" height="9.6" rx="3" fill="none" stroke="#d6d6d6" stroke-width="1.1"/><path d="M3.4 8.4C3.4 11.6 5.8 13.6 9 13.6C12.2 13.6 14.6 11.6 14.6 8.4M9 13.6V16.6" fill="none" stroke="#d6d6d6" stroke-width="1.1" stroke-linecap="round"/><path d="M1.4 1.4L16.8 16.8" stroke="#1f1f1f" stroke-width="2.6"/><path d="M1.4 1.4L16.6 16.6" stroke="#d6d6d6" stroke-width="1.1" stroke-linecap="round"/></svg>
<div class="a" style="left:962px;top:554px;width:32px;height:32px;border-radius:50%;background:#eadcd8"></div><div class="txt" style="left:962px;top:562px;width:32px;text-align:center;font-size:13px;line-height:16px;color:#7a3a30;-webkit-text-stroke:.35px currentColor">ЧА</div>
<div class="txt" style="left:1002.5px;top:562px;font-size:13.9px;line-height:18px;color:#fff">Чебатуро Андрій Андрійович</div>
<svg class="a" style="left:1222px;top:561px" width="18" height="18" viewBox="0 0 18 18"><rect x="6" y="1.2" width="6" height="9.6" rx="3" fill="none" stroke="#d6d6d6" stroke-width="1.1"/><path d="M3.4 8.4C3.4 11.6 5.8 13.6 9 13.6C12.2 13.6 14.6 11.6 14.6 8.4M9 13.6V16.6" fill="none" stroke="#d6d6d6" stroke-width="1.1" stroke-linecap="round"/><path d="M1.4 1.4L16.8 16.8" stroke="#1f1f1f" stroke-width="2.6"/><path d="M1.4 1.4L16.6 16.6" stroke="#d6d6d6" stroke-width="1.1" stroke-linecap="round"/></svg>
<div class="a" style="left:962px;top:602px;width:32px;height:32px;border-radius:50%;background:#ecd4d6"></div><div class="txt" style="left:962px;top:610px;width:32px;text-align:center;font-size:13px;line-height:16px;color:#7a1e28;-webkit-text-stroke:.35px currentColor">ЧГ</div>
<div class="txt" style="left:1002.5px;top:602px;font-size:13.9px;line-height:18px;color:#fff">Чуйко Геннадій (гость)</div><div class="txt" style="left:1002.5px;top:622px;font-size:12.1px;line-height:16px;color:#adadad">Гость собрания</div>
<svg class="a" style="left:1222px;top:609px" width="18" height="18" viewBox="0 0 18 18"><rect x="6" y="1.2" width="6" height="9.6" rx="3" fill="none" stroke="#d6d6d6" stroke-width="1.1"/><path d="M3.4 8.4C3.4 11.6 5.8 13.6 9 13.6C12.2 13.6 14.6 11.6 14.6 8.4M9 13.6V16.6" fill="none" stroke="#d6d6d6" stroke-width="1.1" stroke-linecap="round"/><path d="M1.4 1.4L16.8 16.8" stroke="#1f1f1f" stroke-width="2.6"/><path d="M1.4 1.4L16.6 16.6" stroke="#d6d6d6" stroke-width="1.1" stroke-linecap="round"/></svg>
<div class="a" style="left:962px;top:650px;width:32px;height:32px;border-radius:50%;overflow:hidden;background:#555"><div class="a" style="left:0;top:0;width:32px;height:32px;background:linear-gradient(90deg,#6a5040,#c8a888 60%,#d0b090)"></div><div class="a" style="left:13px;top:1px;width:11px;height:14px;background:#d8b8a8;border-radius:45%;filter:blur(.5px)"></div><div class="a" style="left:2px;top:6px;width:10px;height:22px;background:#141414;transform:rotate(25deg);filter:blur(.5px)"></div><div class="a" style="left:3px;top:17px;width:29px;height:16px;background:#121414;border-radius:30% 30% 0 0;filter:blur(.5px)"></div><div class="a" style="left:14px;top:15px;width:8px;height:17px;background:#20a080;transform:rotate(12deg);filter:blur(.5px)"></div><div class="a" style="left:7px;top:19px;width:2px;height:10px;background:#e0e0e0;transform:rotate(25deg)"></div></div>
<div class="txt" style="left:1002.5px;top:658px;font-size:13.9px;line-height:18px;color:#fff">Школа Поліна Василівна</div>
<svg class="a" style="left:1222px;top:657px" width="18" height="18" viewBox="0 0 18 18"><rect x="6" y="1.2" width="6" height="9.6" rx="3" fill="none" stroke="#d6d6d6" stroke-width="1.1"/><path d="M3.4 8.4C3.4 11.6 5.8 13.6 9 13.6C12.2 13.6 14.6 11.6 14.6 8.4M9 13.6V16.6" fill="none" stroke="#d6d6d6" stroke-width="1.1" stroke-linecap="round"/><path d="M1.4 1.4L16.8 16.8" stroke="#1f1f1f" stroke-width="2.6"/><path d="M1.4 1.4L16.6 16.6" stroke="#d6d6d6" stroke-width="1.1" stroke-linecap="round"/></svg>
<svg class="a" style="left:947px;top:705px" width="10" height="6" viewBox="0 0 10 6"><path d="M0.5 0.5H9L4.75 5.5Z" fill="#bdbdbd"/></svg>
<div class="txt" style="left:961px;top:700px;font-size:11.9px;line-height:16px;color:#e6e6e6;text-shadow:0 0 .3px #fff">Люди добавлены в чат (1)</div>
<div class="a" style="left:962px;top:736px;width:32px;height:32px;border-radius:50%;background:#f6d6d4"></div><div class="txt" style="left:962px;top:744px;width:32px;text-align:center;font-size:13px;line-height:16px;color:#8a2a24;-webkit-text-stroke:.35px currentColor">ПФ</div>
<div class="txt" style="left:1002.5px;top:744px;font-size:13.9px;line-height:18px;color:#fff">Пошта Юридичний факультет</div>
<div class="a" style="left:981px;top:756px;width:15px;height:15px;border-radius:50%;background:#6bb700;border:2px solid #1f1f1f"></div>
<svg class="a" style="left:984.5px;top:760px" width="8" height="7" viewBox="0 0 8 7"><path d="M1 3.6L3 5.4L7 1.4" fill="none" stroke="#1f1f1f" stroke-width="1.3"/></svg>
<!-- bottom desktop strip -->
<div class="a" style="left:1px;top:777px;width:6px;height:7px;background:linear-gradient(180deg,#dedede,#f4f4f4)"></div><div class="a" style="left:7px;top:777px;width:231px;height:7px;background:linear-gradient(180deg,#bdbdbd,#d8d8d8)"></div><div class="a" style="left:238px;top:777px;width:114px;height:7px;background:linear-gradient(180deg,#dedede,#f4f4f4)"></div><div class="a" style="left:352px;top:777px;width:119px;height:7px;background:linear-gradient(180deg,#bdbdbd,#d8d8d8)"></div><div class="a" style="left:471px;top:777px;width:56px;height:7px;background:linear-gradient(180deg,#dedede,#f4f4f4)"></div><div class="a" style="left:527px;top:777px;width:304px;height:7px;background:#1a2636"></div><div class="a" style="left:831px;top:777px;width:26px;height:7px;background:linear-gradient(180deg,#dedede,#f4f4f4)"></div><div class="a" style="left:857px;top:777px;width:118px;height:7px;background:linear-gradient(180deg,#bdbdbd,#d8d8d8)"></div><div class="a" style="left:975px;top:777px;width:55px;height:7px;background:linear-gradient(180deg,#dedede,#f4f4f4)"></div><div class="a" style="left:1030px;top:777px;width:229px;height:7px;background:linear-gradient(180deg,#bdbdbd,#d8d8d8)"></div><div class="a" style="left:532px;top:778px;width:6px;height:5px;background:#e8e8f0;opacity:.8"></div><div class="a" style="left:540px;top:778px;width:6px;height:5px;background:#9aa0b0;opacity:.8"></div><div class="a" style="left:552px;top:778px;width:6px;height:5px;background:#e0a020;opacity:.8"></div><div class="a" style="left:562px;top:778px;width:6px;height:5px;background:#3070d0;opacity:.8"></div><div class="a" style="left:574px;top:778px;width:6px;height:5px;background:#c02020;opacity:.8"></div><div class="a" style="left:586px;top:778px;width:6px;height:5px;background:#40a0e0;opacity:.8"></div><div class="a" style="left:597px;top:778px;width:6px;height:5px;background:#e0c040;opacity:.8"></div><div class="a" style="left:609px;top:778px;width:6px;height:5px;background:#d0d8f0;opacity:.8"></div><div class="a" style="left:620px;top:778px;width:6px;height:5px;background:#c04080;opacity:.8"></div><div class="a" style="left:632px;top:778px;width:6px;height:5px;background:#e09020;opacity:.8"></div><div class="a" style="left:644px;top:778px;width:6px;height:5px;background:#8080d0;opacity:.8"></div>

</body></html>
